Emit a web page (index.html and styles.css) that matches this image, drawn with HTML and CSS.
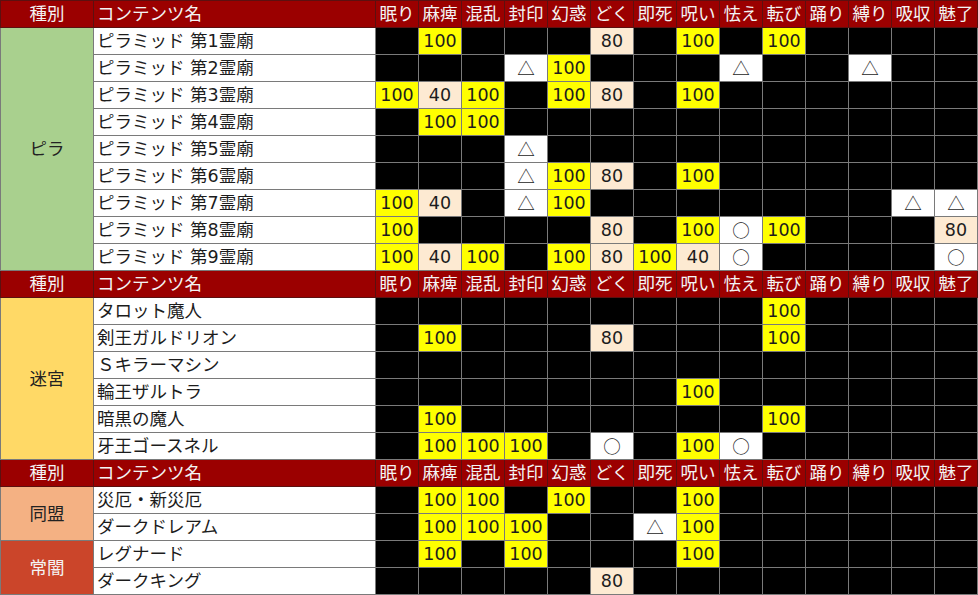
FILE: index.html
```html
<!DOCTYPE html>
<html lang="ja">
<head>
<meta charset="utf-8">
<title>耐性表</title>
<link rel="stylesheet" href="styles.css">
</head>
<body>
<table class="sheet">
<colgroup>
<col class="c-kind"><col class="c-name">
<col class="c-st"><col class="c-st"><col class="c-st"><col class="c-st"><col class="c-st"><col class="c-st"><col class="c-st">
<col class="c-st"><col class="c-st"><col class="c-st"><col class="c-st"><col class="c-st"><col class="c-st"><col class="c-st">
</colgroup>
<tbody>
<tr class="hd"><th class="kind">種別</th><th class="name">コンテンツ名</th><th>眠り</th><th>麻痺</th><th>混乱</th><th>封印</th><th>幻惑</th><th>どく</th><th>即死</th><th>呪い</th><th>怯え</th><th>転び</th><th>踊り</th><th>縛り</th><th>吸収</th><th>魅了</th></tr>
<tr><td class="kind pira" rowspan="9">ピラ</td><td class="name">ピラミッド 第1霊廟</td><td></td><td class="y">100</td><td></td><td></td><td></td><td class="c">80</td><td></td><td class="y">100</td><td></td><td class="y">100</td><td></td><td></td><td></td><td></td></tr>
<tr><td class="name">ピラミッド 第2霊廟</td><td></td><td></td><td></td><td class="w">△</td><td class="y">100</td><td></td><td></td><td></td><td class="w">△</td><td></td><td></td><td class="w">△</td><td></td><td></td></tr>
<tr><td class="name">ピラミッド 第3霊廟</td><td class="y">100</td><td class="c">40</td><td class="y">100</td><td></td><td class="y">100</td><td class="c">80</td><td></td><td class="y">100</td><td></td><td></td><td></td><td></td><td></td><td></td></tr>
<tr><td class="name">ピラミッド 第4霊廟</td><td></td><td class="y">100</td><td class="y">100</td><td></td><td></td><td></td><td></td><td></td><td></td><td></td><td></td><td></td><td></td><td></td></tr>
<tr><td class="name">ピラミッド 第5霊廟</td><td></td><td></td><td></td><td class="w">△</td><td></td><td></td><td></td><td></td><td></td><td></td><td></td><td></td><td></td><td></td></tr>
<tr><td class="name">ピラミッド 第6霊廟</td><td></td><td></td><td></td><td class="w">△</td><td class="y">100</td><td class="c">80</td><td></td><td class="y">100</td><td></td><td></td><td></td><td></td><td></td><td></td></tr>
<tr><td class="name">ピラミッド 第7霊廟</td><td class="y">100</td><td class="c">40</td><td></td><td class="w">△</td><td class="y">100</td><td></td><td></td><td></td><td></td><td></td><td></td><td></td><td class="w">△</td><td class="w">△</td></tr>
<tr><td class="name">ピラミッド 第8霊廟</td><td class="y">100</td><td></td><td></td><td></td><td></td><td class="c">80</td><td></td><td class="y">100</td><td class="w">○</td><td class="y">100</td><td></td><td></td><td></td><td class="c">80</td></tr>
<tr><td class="name">ピラミッド 第9霊廟</td><td class="y">100</td><td class="c">40</td><td class="y">100</td><td></td><td class="y">100</td><td class="c">80</td><td class="y">100</td><td class="c">40</td><td class="w">○</td><td></td><td></td><td></td><td></td><td class="w">○</td></tr>
<tr class="hd"><th class="kind">種別</th><th class="name">コンテンツ名</th><th>眠り</th><th>麻痺</th><th>混乱</th><th>封印</th><th>幻惑</th><th>どく</th><th>即死</th><th>呪い</th><th>怯え</th><th>転び</th><th>踊り</th><th>縛り</th><th>吸収</th><th>魅了</th></tr>
<tr><td class="kind maze" rowspan="6">迷宮</td><td class="name">タロット魔人</td><td></td><td></td><td></td><td></td><td></td><td></td><td></td><td></td><td></td><td class="y">100</td><td></td><td></td><td></td><td></td></tr>
<tr><td class="name">剣王ガルドリオン</td><td></td><td class="y">100</td><td></td><td></td><td></td><td class="c">80</td><td></td><td></td><td></td><td class="y">100</td><td></td><td></td><td></td><td></td></tr>
<tr><td class="name">Ｓキラーマシン</td><td></td><td></td><td></td><td></td><td></td><td></td><td></td><td></td><td></td><td></td><td></td><td></td><td></td><td></td></tr>
<tr><td class="name">輪王ザルトラ</td><td></td><td></td><td></td><td></td><td></td><td></td><td></td><td class="y">100</td><td></td><td></td><td></td><td></td><td></td><td></td></tr>
<tr><td class="name">暗黒の魔人</td><td></td><td class="y">100</td><td></td><td></td><td></td><td></td><td></td><td></td><td></td><td class="y">100</td><td></td><td></td><td></td><td></td></tr>
<tr><td class="name">牙王ゴースネル</td><td></td><td class="y">100</td><td class="y">100</td><td class="y">100</td><td></td><td class="w">○</td><td></td><td class="y">100</td><td class="w">○</td><td></td><td></td><td></td><td></td><td></td></tr>
<tr class="hd"><th class="kind">種別</th><th class="name">コンテンツ名</th><th>眠り</th><th>麻痺</th><th>混乱</th><th>封印</th><th>幻惑</th><th>どく</th><th>即死</th><th>呪い</th><th>怯え</th><th>転び</th><th>踊り</th><th>縛り</th><th>吸収</th><th>魅了</th></tr>
<tr><td class="kind ally" rowspan="2">同盟</td><td class="name">災厄・新災厄</td><td></td><td class="y">100</td><td class="y">100</td><td></td><td class="y">100</td><td></td><td></td><td class="y">100</td><td></td><td></td><td></td><td></td><td></td><td></td></tr>
<tr><td class="name">ダークドレアム</td><td></td><td class="y">100</td><td class="y">100</td><td class="y">100</td><td></td><td></td><td class="w">△</td><td class="y">100</td><td></td><td></td><td></td><td></td><td></td><td></td></tr>
<tr><td class="kind dark" rowspan="2">常闇</td><td class="name">レグナード</td><td></td><td class="y">100</td><td></td><td class="y">100</td><td></td><td></td><td></td><td class="y">100</td><td></td><td></td><td></td><td></td><td></td><td></td></tr>
<tr><td class="name">ダークキング</td><td></td><td></td><td></td><td></td><td></td><td class="c">80</td><td></td><td></td><td></td><td></td><td></td><td></td><td></td><td></td></tr>
</tbody>
</table>
</body>
</html>
```
FILE: styles.css
```css
html, body {
  margin: 0;
  padding: 0;
  background: #ffffff;
}

.sheet {
  border-collapse: collapse;
  table-layout: fixed;
  width: 978px;
  font-family: "DejaVu Sans", "Noto Sans CJK JP", sans-serif;
  font-size: 17.5px;
  color: #1c1c1c;
}

.c-kind { width: 93px; }
.c-name { width: 282px; }
.c-st { width: 43px; }

.sheet tr { height: 27px; }

.sheet td, .sheet th {
  border: 1px solid #7a7a7a;
  padding: 0;
  height: 26px;
  line-height: 24px;
  text-align: center;
  vertical-align: middle;
  white-space: nowrap;
  overflow: hidden;
  background: #000000;
  font-weight: normal;
}

.sheet .hd th {
  background: #9b0000;
  color: #f4f4f4;
  border-color: #5c1010;
}

.sheet .name {
  text-align: left;
  padding-left: 3px;
  background: #ffffff;
}

.sheet .hd .name { background: #9b0000; }

.sheet .kind { color: #222222; }
.sheet .pira { background: #a9d08e; }
.sheet .maze { background: #ffd966; }
.sheet .ally { background: #f4b183; }
.sheet .dark { background: #cb452a; color: #f4f4f4; }

.sheet .y { background: #ffff00; }
.sheet .c { background: #fdead2; }
.sheet .w {
  background: #ffffff;
  font-family: "Noto Sans CJK JP", sans-serif;
}
```
